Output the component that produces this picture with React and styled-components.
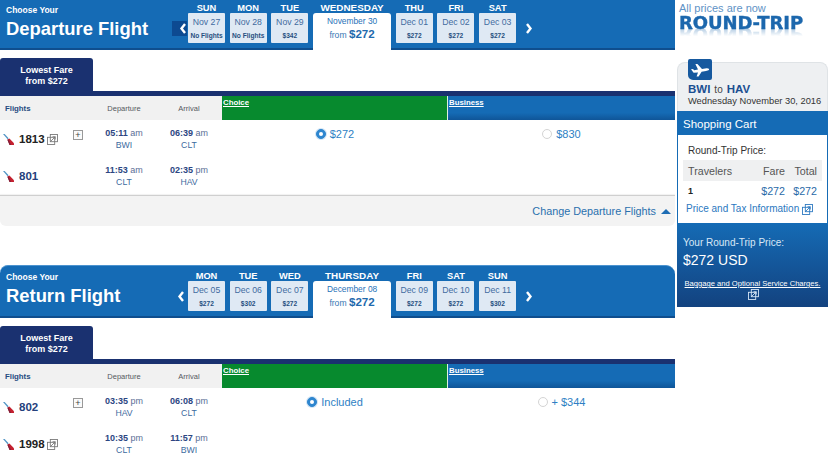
import React from "react";
import styled, { createGlobalStyle } from "styled-components";

const Global = createGlobalStyle`
  html, body { margin: 0; padding: 0; background: #fff; }
  body { font-family: "Liberation Sans", Arial, sans-serif; width: 830px; height: 460px; overflow: hidden; }
  * { box-sizing: border-box; }
`;

const Page = styled.div`display: flex; width: 830px; height: 460px; overflow: hidden;`;
const Main = styled.main`width: 675px; flex: none; display: flex; flex-direction: column;`;
const Section = styled.section`display: flex; flex-direction: column; margin-bottom: ${p => p.$mb || 0}px;`;

const Header = styled.header`
  display: flex; align-items: stretch; height: ${p => p.$h}px; padding-top: ${p => p.$pt}px;
  background: #156bb5; border-bottom: 2px solid #0f4e8e;
  ${p => p.$round ? "border-top: 1px solid #4c93cf; border-radius: 8px 9px 0 0;" : ""}
`;
const Title = styled.div`width: 172px; flex: none; padding: ${p => p.$top}px 0 0 6px; color: #fff; font-weight: 700;`;
const Choose = styled.div`font-size: 8.5px; line-height: 12px;`;
const Big = styled.div`font-size: 18.4px; line-height: 23px; margin-top: 1px; white-space: nowrap;`;
const Arrow = styled.div`
  width: ${p => p.$w}px; flex: none; height: 30px; margin-top: 10px; display: flex; align-items: center; justify-content: center;
`;
const ArrowBox = styled.div`
  width: 15px; height: 15px; background: ${p => p.$boxed ? "#0d4a91" : "transparent"}; display: flex; align-items: center; justify-content: ${p => p.$boxed ? "flex-end" : "center"};
  margin-left: ${p => p.$ml}px;
`;
const Days = styled.div`display: flex; gap: 4.7px;`;
const Day = styled.div`width: ${p => p.$sel ? 78 : 37}px; display: flex; flex-direction: column; align-items: center;`;
const DayLabel = styled.div`height: 10px; line-height: 10px; font-weight: 700; color: #fff; font-size: ${p => p.$sel ? 9.9 : 9.3}px; white-space: nowrap;`;
const Cell = styled.div`
  width: 100%; height: 30px; background: #dfe9f4; border-radius: 1px; text-align: center; color: #3f6b9f;
`;
const CellDate = styled.div`font-size: 8.7px; line-height: 11px; margin-top: 4px;`;
const CellPrice = styled.div`font-size: 6.6px; line-height: 9px; margin-top: 3px; font-weight: 700; color: #264f80; white-space: nowrap;`;
const Selected = styled.div`
  width: 100%; flex: 1; background: #fff; border-radius: 3px 3px 0 0; margin-bottom: -2px; text-align: center; color: #1f72b8;
`;
const SelDate = styled.div`font-size: 8.4px; line-height: 11px; margin-top: 3px;`;
const SelPrice = styled.div`font-size: 8.6px; line-height: 14px; margin-top: 0; color: #3878b4; b { font-size: 11.6px; color: #1f6aad; }`;

const Tab = styled.div`
  width: 93px; height: 33px; margin-top: 8px; background: #1a3170; color: #fff; font-weight: 700; font-size: 9px; line-height: 10.5px;
  text-align: center; padding-top: 7px; border-radius: 3px 3px 0 0;
`;
const Grid = styled.div`display: grid; grid-template-columns: 92px 64px 66px 226px 227px;`;
const HeadRow = styled(Grid)`height: 29px; border-top: 5.5px solid #1a3170; background: #f1f1f1;`;
const HeadCell = styled.div`
  display: flex; align-items: center; font-size: 7.5px; color: #55595f;
  justify-content: ${p => p.$left ? "flex-start" : "center"};
  ${p => p.$left ? "padding-left: 5px; font-weight: 700; color: #264a80; font-size: 7.8px;" : ""}
`;
const Fare = styled.div`
  padding: 2px 0 0 1px; font-size: 7.8px; font-weight: 700; color: #fff; text-decoration: underline; line-height: 10px;
  background: ${p => p.$green ? "#078a2e" : "linear-gradient(#156bb5 70%, #0f5598)"};
  border-right: ${p => p.$green ? "1px solid #dff0e0" : "0"};
`;
const Row = styled(Grid)`height: 37px;`;
const FlightCell = styled.div`display: flex; align-items: center; padding: 1px 0 0 3px; position: relative;`;
const FlightNo = styled.span`font-size: 11.5px; font-weight: 700; margin-left: 5px; color: ${p => p.$dark ? "#222" : "#25407c"};`;
const PlusBox = styled.span`
  position: absolute; left: 73px; top: 10px; width: 10px; height: 10px; border: 1px solid #999; background: #fafafa;
  display: flex; align-items: center; justify-content: center; color: #444; font-size: 9px; line-height: 8px;
`;
const Ext = styled.svg`margin-left: ${p => p.$ml || 2}px; flex: none;`;
const Time = styled.div`text-align: center; padding-top: 7px; font-size: 9px; line-height: 12px; color: #5a6e96; white-space: nowrap;`;
const Clock = styled.div`b { color: #2c4682; font-size: 9px; }`;
const Code = styled.div`color: #3d6a9e; font-size: 8.7px;`;
const RadioCell = styled.div`
  display: flex; align-items: flex-start; justify-content: center; gap: 4px; padding-top: 7px;
  font-size: 11px; line-height: 14px; color: #2e7fc4;
`;
const Radio = styled.span`
  width: 10px; height: 10px; margin-top: 2px; border-radius: 50%; flex: none; display: flex; align-items: center; justify-content: center;
  background: ${p => p.$on ? "#2e86cf" : "#fff"}; border: 1px solid ${p => p.$on ? "#2e86cf" : "#d4d4d4"};
  ${p => p.$on ? "box-shadow: 0 0 0 1px #d3e5f5; &::after { content: ''; width: 4px; height: 4px; border-radius: 50%; background: #fff; }" : ""}
`;
const Footer = styled.div`
  height: 31px; margin-top: 1px; background: #f3f3f3; border-top: 1px solid #cfcfcf; border-radius: 0 0 6px 6px;
  display: flex; align-items: center; justify-content: flex-end; gap: 5px; padding-right: 4px; color: #2a70ae; font-size: 10.8px;
  box-shadow: 0 -1px 1px rgba(0,0,0,.06);
`;
const Triangle = styled.span`width: 0; height: 0; border-left: 5px solid transparent; border-right: 5px solid transparent; border-bottom: 5px solid #1e6db4;`;

const Aside = styled.aside`width: 153px; margin-left: 2px; flex: none; display: flex; flex-direction: column;`;
const Promo = styled.div`height: 62px; padding: 2px 0 0 2px;`;
const PromoLine = styled.div`font-size: 11px; line-height: 12px; color: #5f93c6;`;
const RoundTrip = styled.div`
  font-family: "DejaVu Sans", sans-serif; font-weight: 700; font-size: 18px; line-height: 17px; color: #1c67ad; letter-spacing: -0.1px; white-space: nowrap;
  -webkit-box-reflect: below -5px linear-gradient(transparent 40%, rgba(255,255,255,.45));
  -webkit-text-stroke: 0.4px #1c67ad;
`;
const Card = styled.div`
  background: #eef0f2; border: 1px solid #dfe3e6; border-bottom: 0; border-radius: 8px 8px 0 0; position: relative; padding: 20px 0 0 10px; height: 49px; width: 151px;
`;
const PlaneBadge = styled.div`
  position: absolute; left: 10px; top: -4px; width: 24px; height: 21px; background: #16599f; border-radius: 2px 2px 2px 5px;
  display: flex; align-items: center; justify-content: center;
`;
const Route = styled.div`font-size: 10px; line-height: 13px; color: #444; b { color: #1a4f91; font-size: 11.5px; } span { margin: 0 4px; }`;
const RouteDate = styled.div`font-size: 9.3px; line-height: 11px; color: #333; white-space: nowrap;`;
const CartHead = styled.div`height: 24px; width: 151px; background: #156bb5; color: #fff; font-size: 11.5px; line-height: 26px; padding-left: 6px;`;
const CartBody = styled.div`width: 151px; height: 88px; border: solid #156bb5; border-width: 0 1px; padding: 10px 5px 0 5px; color: #333;`;
const Small = styled.div`font-size: 10px; line-height: 11px; padding-left: 5px;`;
const TableHead = styled.div`
  display: grid; grid-template-columns: 64px 33px 1fr; margin-top: 4px; height: 21px; background: #eff0f1; align-items: center; font-size: 10.7px; color: #555; padding: 0 5px;
  span:nth-child(n+2) { text-align: right; }
`;
const TableRow = styled.div`
  display: grid; grid-template-columns: 64px 33px 1fr; height: 20px; padding: 0 5px; align-items: center; font-size: 10.7px; color: #2a6aa8;
  span:first-child { color: #222; font-weight: 700; font-size: 9px; } span:nth-child(n+2) { text-align: right; }
`;
const CartLink = styled.div`display: flex; align-items: center; margin-top: 2px; font-size: 10px; line-height: 12px; color: #2b78c0; padding-left: 3px; white-space: nowrap;`;
const Total = styled.div`
  width: 151px; height: 84px; background: linear-gradient(#156bb5, #13427f); color: #fff; padding: 14px 0 0 6px;
`;
const TotalLabel = styled.div`font-size: 10px; line-height: 12px; color: #d8e8f6;`;
const TotalPrice = styled.div`font-size: 14px; line-height: 16px; margin-top: 3px;`;
const Charges = styled.div`font-size: 7.6px; line-height: 10px; text-decoration: underline; margin: 11px 0 0 -6px; white-space: nowrap; text-align: center; width: 151px;`;

const Chevron = ({ left }) => (
  <svg width="8" height="11" viewBox="0 0 8 11">
    <polyline points={left ? "6,1 2.5,5.5 6,10" : "2,1 5.5,5.5 2,10"} fill="none" stroke="#fff" strokeWidth="2.4" />
  </svg>
);
const ExtIcon = ({ color = "#777", ml }) => (
  <Ext $ml={ml} width="11" height="11" viewBox="0 0 10 10" fill="none" stroke={color} strokeWidth=".8">
    <rect x="3" y=".5" width="6.5" height="6.5" />
    <rect x=".5" y="3" width="6.5" height="6.5" fill="none" />
    <path d="M3.5 6.5 L7.5 2.5 M5 2.5 H7.5 V5" />
  </Ext>
);
const Tail = () => (
  <svg width="11" height="11" viewBox="0 0 11 11" style={{ flex: "none" }}>
    <polygon points="0,0 1.6,0 5.6,4.2 4.6,5.2" fill="#4f93c4" />
    <polygon points="4.4,5.8 6.4,4.6 11,9.2 11,11 6.6,11" fill="#c4202f" />
    <polygon points="4.4,5.8 5.4,5.2 8,11 6.6,11" fill="#7c1f3a" />
  </svg>
);
const Plane = () => (
  <svg width="20" height="14" viewBox="0 0 20 14">
    <path d="M1 6.2 L3 6 L4.2 7.2 L8 6.6 L5.4 1 L7.4 1 L12 6 L16.5 5.2 C18.5 5 19.5 6 19 6.8 C18.5 7.6 17 7.8 16 8 L11.6 8.8 L8.6 13.4 L6.6 13.4 L8 9.4 L3.6 9.8 Z" fill="#fff" />
  </svg>
);

const FlightSection = ({ data, mb }) => (
  <Section $mb={mb}>
    <Header $h={data.h} $pt={data.pt} $round={data.round}>
      <Title $top={data.round ? 0 : 1}>
        <Choose>Choose Your</Choose>
        <Big>{data.title}</Big>
      </Title>
      <Arrow $w={16}>
        <ArrowBox $boxed={data.boxed} $ml={data.boxed ? -2 : 2}><Chevron left /></ArrowBox>
      </Arrow>
      <Days>
        {data.days.map(d => (
          <Day key={d.label} $sel={d.sel}>
            <DayLabel $sel={d.sel}>{d.label}</DayLabel>
            {d.sel ? (
              <Selected>
                <SelDate>{d.date}</SelDate>
                <SelPrice>from <b>{d.price}</b></SelPrice>
              </Selected>
            ) : (
              <Cell>
                <CellDate>{d.date}</CellDate>
                <CellPrice>{d.price}</CellPrice>
              </Cell>
            )}
          </Day>
        ))}
      </Days>
      <Arrow $w={26}><Chevron /></Arrow>
    </Header>
    <Tab>Lowest Fare<br />from $272</Tab>
    <HeadRow>
      <HeadCell $left>Flights</HeadCell>
      <HeadCell>Departure</HeadCell>
      <HeadCell>Arrival</HeadCell>
      <Fare $green>Choice</Fare>
      <Fare>Business</Fare>
    </HeadRow>
    {data.rows.map(r => (
      <Row key={r.no}>
        <FlightCell>
          <Tail />
          <FlightNo $dark={r.ext}>{r.no}</FlightNo>
          {r.ext && <ExtIcon />}
          {r.plus && <PlusBox>+</PlusBox>}
        </FlightCell>
        <Time><Clock><b>{r.dep[0]}</b> {r.dep[1]}</Clock><Code>{r.dep[2]}</Code></Time>
        <Time><Clock><b>{r.arr[0]}</b> {r.arr[1]}</Clock><Code>{r.arr[2]}</Code></Time>
        {r.fares ? (
          <>
            <RadioCell><Radio $on />{r.fares[0]}</RadioCell>
            <RadioCell><Radio />{r.fares[1]}</RadioCell>
          </>
        ) : null}
      </Row>
    ))}
    {data.footer && (
      <Footer>Change Departure Flights <Triangle /></Footer>
    )}
  </Section>
);

const departure = {
  h: 50, pt: 3, boxed: true, title: "Departure Flight", footer: true,
  days: [
    { label: "SUN", date: "Nov 27", price: "No Flights" },
    { label: "MON", date: "Nov 28", price: "No Flights" },
    { label: "TUE", date: "Nov 29", price: "$342" },
    { label: "WEDNESDAY", date: "November 30", price: "$272", sel: true },
    { label: "THU", date: "Dec 01", price: "$272" },
    { label: "FRI", date: "Dec 02", price: "$272" },
    { label: "SAT", date: "Dec 03", price: "$272" },
  ],
  rows: [
    { no: "1813", ext: true, plus: true, dep: ["05:11", "am", "BWI"], arr: ["06:39", "am", "CLT"], fares: ["$272", "$830"] },
    { no: "801", dep: ["11:53", "am", "CLT"], arr: ["02:35", "pm", "HAV"] },
  ],
};
const ret = {
  h: 53, pt: 5, round: true, title: "Return Flight",
  days: [
    { label: "MON", date: "Dec 05", price: "$272" },
    { label: "TUE", date: "Dec 06", price: "$302" },
    { label: "WED", date: "Dec 07", price: "$272" },
    { label: "THURSDAY", date: "December 08", price: "$272", sel: true },
    { label: "FRI", date: "Dec 09", price: "$272" },
    { label: "SAT", date: "Dec 10", price: "$272" },
    { label: "SUN", date: "Dec 11", price: "$302" },
  ],
  rows: [
    { no: "802", plus: true, dep: ["03:35", "pm", "HAV"], arr: ["06:08", "pm", "CLT"], fares: ["Included", "+ $344"] },
    { no: "1998", ext: true, dep: ["10:35", "pm", "CLT"], arr: ["11:57", "pm", "BWI"] },
  ],
};

export default function App() {
  return (
    <Page>
      <Global />
      <Main>
        <FlightSection data={departure} mb={39} />
        <FlightSection data={ret} />
      </Main>
      <Aside>
        <Promo>
          <PromoLine>All prices are now</PromoLine>
          <RoundTrip>ROUND-TRIP</RoundTrip>
        </Promo>
        <Card>
          <PlaneBadge><Plane /></PlaneBadge>
          <Route><b>BWI</b><span>to</span><b>HAV</b></Route>
          <RouteDate>Wednesday November 30, 2016</RouteDate>
        </Card>
        <CartHead>Shopping Cart</CartHead>
        <CartBody>
          <Small>Round-Trip Price:</Small>
          <TableHead><span>Travelers</span><span>Fare</span><span>Total</span></TableHead>
          <TableRow><span>1</span><span>$272</span><span>$272</span></TableRow>
          <CartLink>Price and Tax Information<ExtIcon color="#2b78c0" ml={3} /></CartLink>
        </CartBody>
        <Total>
          <TotalLabel>Your Round-Trip Price:</TotalLabel>
          <TotalPrice>$272 USD</TotalPrice>
          <Charges>Baggage and Optional Service Charges.<br /><ExtIcon color="#d8e8f6" ml={0} /></Charges>
        </Total>
      </Aside>
    </Page>
  );
}
